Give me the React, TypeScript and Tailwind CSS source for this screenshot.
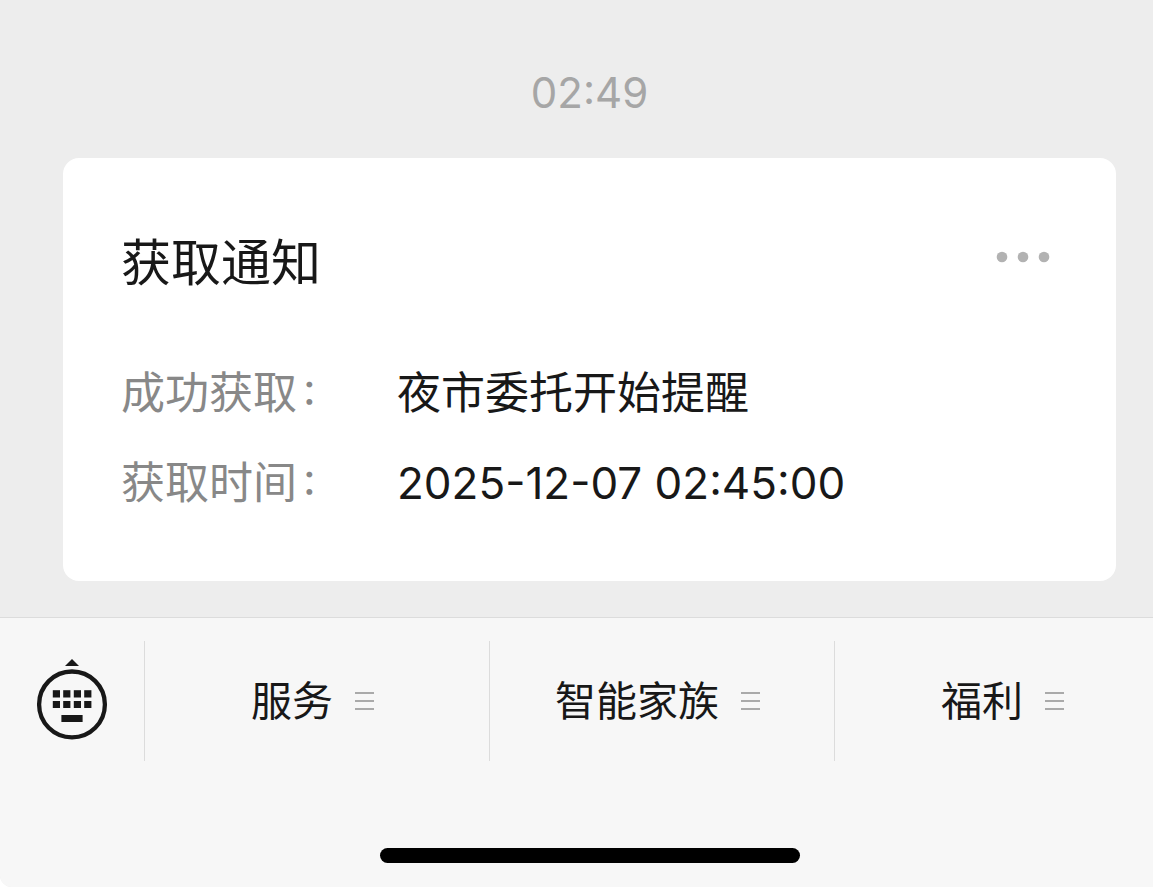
const font = "font-['Inter','Noto_Sans_CJK_SC',sans-serif]";

const details = [
  { label: '成功获取', value: '夜市委托开始提醒' },
  { label: '获取时间', value: '2025-12-07 02:45:00' },
];

const menus = ['服务', '智能家族', '福利'];

function KeyboardIcon() {
  return (
    <svg viewBox="0 0 72 84" className="h-[84px] w-[72px]" fill="#181818" aria-hidden="true">
      <path d="M29 7 36 0l7 7z" />
      <circle cx="36" cy="45.4" r="32.9" fill="none" stroke="#181818" strokeWidth="4.3" />
      {[16.8, 27.2, 37.8, 48.2].map((x) => (
        <g key={x}>
          <rect x={x} y="31.2" width="7.2" height="7.3" />
          <rect x={x} y="42" width="7.2" height="7" />
        </g>
      ))}
      <rect x="25.4" y="56" width="21.2" height="7" />
    </svg>
  );
}

function MenuIcon() {
  return (
    <svg viewBox="0 0 20 20" className="size-5" stroke="#aaaaaa" strokeWidth="2" aria-hidden="true">
      <path d="M0 2h19M0 10h19M0 18h19" />
    </svg>
  );
}

export default function App() {
  return (
    <div className={`min-h-screen overflow-hidden rounded-bl-xl bg-[#ededed] text-[#181818] ${font}`}>
      <div className="-mr-[26px] flex min-h-screen flex-col">
        <main className="flex grow flex-col px-[63px] pb-9">
          <time className="pt-[65px] pb-[37px] text-center text-[42px] leading-14 text-[#a6a6a6]">02:49</time>
          <article className="grow rounded-2xl bg-white px-[58px] pt-[70px] pb-12">
            <header className="flex items-start justify-between">
              <h1 className="text-[50px] leading-[70px]">获取通知</h1>
              <button type="button" aria-label="更多" className="mt-5 mr-2">
                <svg viewBox="0 0 54 18" className="h-[18px] w-[54px]" fill="#b2b2b2" aria-hidden="true">
                  <circle cx="6" cy="9" r="5.3" />
                  <circle cx="27" cy="9" r="5.3" />
                  <circle cx="48" cy="9" r="5.3" />
                </svg>
              </button>
            </header>
            <dl className="mt-[65px] grid grid-cols-[276px_1fr] gap-y-[30px] text-[44px] leading-[60px]">
              {details.map(({ label, value }) => (
                <div key={label} className="contents">
                  <dt className="text-[#888888]">
                    {label}
                    <span className="pl-1.5 [font-feature-settings:'case']">:</span>
                  </dt>
                  <dd>{value}</dd>
                </div>
              ))}
            </dl>
          </article>
        </main>
        <footer className="border-t border-[#dcdcdc] bg-[#f7f7f7] pt-[23px] pb-6">
          <nav className="flex h-[120px]">
            <button type="button" aria-label="键盘" className="flex w-36 items-center justify-center">
              <KeyboardIcon />
            </button>
            {menus.map((name) => (
              <button
                key={name}
                type="button"
                className="flex flex-1 items-center justify-center gap-[22px] border-l border-[#dcdcdc] pr-2 text-[41px]"
              >
                <span className="pt-0.5">{name}</span>
                <MenuIcon />
              </button>
            ))}
          </nav>
          <div className="mx-auto mt-[87px] h-[15px] w-[420px] rounded-full bg-black" />
        </footer>
      </div>
    </div>
  );
}
